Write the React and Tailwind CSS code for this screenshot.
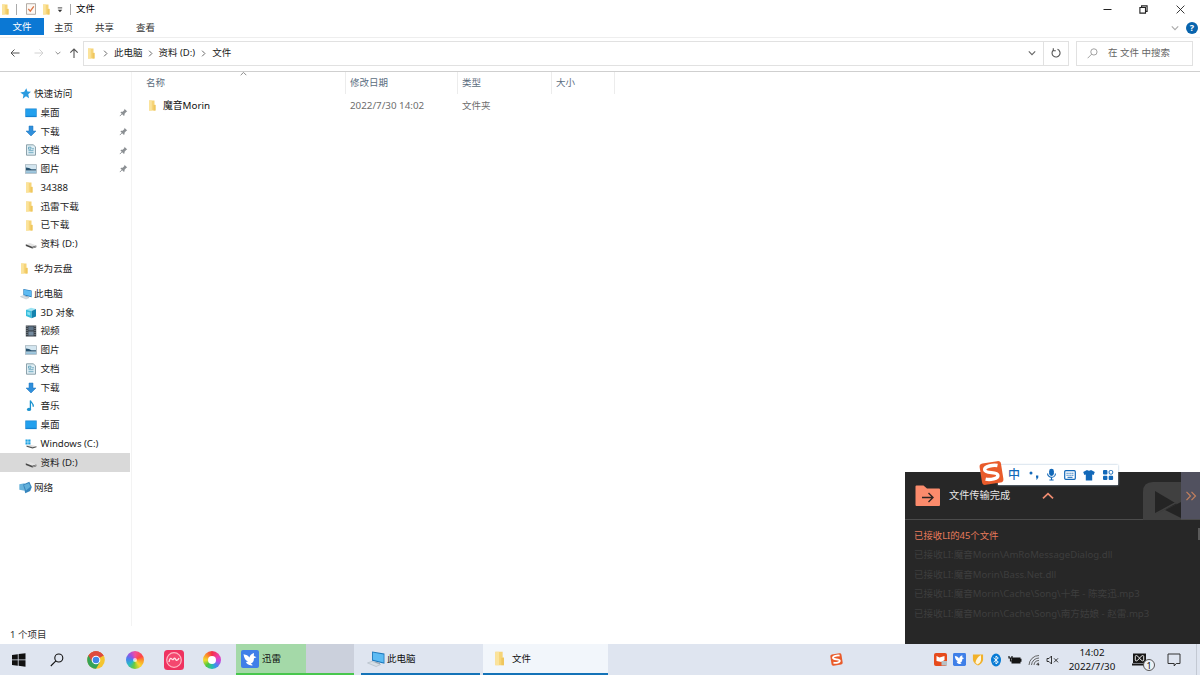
import React from "react";

const Folder = ({ className = "w-[9px] h-[11px]" }) => (
  <svg viewBox="0 0 9 11" className={className}>
    <path d="M1 0.5h5.5v4.2h1v5.800H1z" fill="#f6d477" />
    <path d="M1 0.5h2.800v10H1z" fill="#fbe39b" />
    <path d="M5.500 5h2v5.500h-2z" fill="#efc65e" />
  </svg>
);

const Star = () => (
  <svg viewBox="0 0 12 12" className="w-[11px] h-[11px]">
    <path d="M6.900 0.4l1.200 3.500 3.800.3-2.900 2.700.9 4.300-3.400-2.300-3.500 2.700.8-4.200L.3 5l4.300-.8z" fill="#2b9be0" />
  </svg>
);

const Desktop = () => (
  <svg viewBox="0 0 12 10" className="w-3 h-[10px]">
    <rect x="0.3" y="0.5" width="11.4" height="8.6" fill="#1583d2" />
    <rect x="1" y="1.2" width="10" height="6.6" fill="#22a0ee" />
  </svg>
);

const Download = () => (
  <svg viewBox="0 0 12 12" className="w-3 h-3">
    <path d="M4 1h4v5h3L6 11 1 6h3z" fill="#2f8fdb" stroke="#1c74bd" strokeWidth="0.5" />
  </svg>
);

const Doc = () => (
  <svg viewBox="0 0 12 12" className="w-3 h-3">
    <path d="M1.500.8h6.700l2.300 2v8.400h-9z" fill="#dfeef4" stroke="#8198a3" strokeWidth="0.9" />
    <path d="M3.5 3.2h2.5v2H3.5zM7 4.8h2M3.5 6.7h5M3.5 8.7h5" fill="none" stroke="#559bb6" strokeWidth="0.8" />
  </svg>
);

const Picture = () => (
  <svg viewBox="0 0 12 10" className="w-3 h-[10px]">
    <rect x="0.6" y="0.7" width="10.8" height="8.600" fill="#d4e6f0" stroke="#9aabb5" strokeWidth="0.7" />
    <path d="M1 3.500l3 .5 2.500 1.300 4.500-.1v1.300H1z" fill="#28536f" />
    <path d="M1 7.3h10v1.600H1z" fill="#8ebcd6" />
  </svg>
);

const Drive = () => (
  <svg viewBox="0 0 12 10" className="mt-[2px] w-3 h-[10px]">
    <path d="M.8 4.300L5 3l6.300 2.400-4.100 1.400z" fill="#e3e3e3" />
    <path d="M.8 4.300l6.400 2.500 4.100-1.400v1.800L7.200 8.600.8 5.900z" fill="#4a4a4a" />
    <path d="M7.6 7.200l3.300-1.100v.8L7.600 8z" fill="#b5b5b5" />
  </svg>
);

const WinDrive = () => (
  <svg viewBox="0 0 12 10" className="w-3 h-[10px]">
    <path d="M.5.5h2.200v2.200H.5zM3.200.5h2.300v2.200H3.200zM.5 3.2h2.200v2.200H.5zM3.200 3.200h2.300v2.200H3.200z" fill="#1ba1e2" />
    <path d="M1.500 6.600L6 6l5.500 1.200-4 1z" fill="#ddd" />
    <path d="M1.500 6.600l6 1.600 4-1v1l-4 1.300-6-1.800z" fill="#555" />
  </svg>
);

const Cube = () => (
  <svg viewBox="0 0 12 12" className="w-3 h-3">
    <path d="M1 2.800L6 .7l5 1.400-4.400 2z" fill="#9ae3f3" />
    <path d="M1 2.800l5.600 1.300v7.200L1 9z" fill="#38bddd" />
    <path d="M6.600 4.100L11 2.100v7.300l-4.400 1.900z" fill="#1383ae" />
    <path d="M2.200 4.700l3 .7v3l-3-1z" fill="#88e2f2" />
  </svg>
);

const Film = () => (
  <svg viewBox="0 0 12 12" className="w-3 h-3">
    <rect x="0.8" y="0.5" width="10.4" height="11" fill="#3a4148" />
    <path d="M3.4 1.4h5.2v4H3.4z" fill="#5f7488" />
    <path d="M3.4 6.5h5.2v4H3.4z" fill="#768ca0" />
    <path d="M2 1v10M10 1v10" stroke="#aab2ba" strokeWidth="0.8" strokeDasharray="1 1" />
  </svg>
);

const Music = () => (
  <svg viewBox="0 0 12 12" className="w-3 h-3">
    <path d="M5.4 .5v8.500M5.600.8c.3 2.200 3.600 2.700 2.500 6" fill="none" stroke="#1c93cf" strokeWidth="1.3" />
    <ellipse cx="4" cy="9.400" rx="2.100" ry="1.700" fill="#1c93cf" />
  </svg>
);

const Computer = ({ className = "w-3 h-3" }) => (
  <svg viewBox="0 0 16 16" className={className}>
    <path d="M4.500 1.300L15.500 3.200v9L4.500 9.500z" fill="#1d78bb" />
    <path d="M5.300 2.300l9.500 1.700v7l-9.500-2.400z" fill="#5dbbf3" />
    <path d="M7 10.300l4.500 1.200v1.300L7 12z" fill="#8d9ba8" />
    <path d="M.5 11.500l4-1.400 7.600 2.800-4 1.800z" fill="#d7dfe6" stroke="#a7b3bd" strokeWidth="0.5" />
  </svg>
);

const Network = () => (
  <svg viewBox="0 0 12 12" className="-ml-px w-[13px] h-[13px]">
    <path d="M.3 3l4.900-.9v7L.3 8z" fill="#69b3db" />
    <path d="M3.800 3.300L9.500.8l2.300 4.700-1.500 3.800-4.500 2z" fill="#3585bd" />
    <path d="M4.600 3.800l4.600-1.800 1.300 3.400-4 3.400z" fill="#62b0da" />
  </svg>
);

const Pin = () => (
  <svg viewBox="0 0 10 10" className="w-[9px] h-[9px]">
    <path d="M6 .8l3.200 3.100-1 .4-2 2-.1 1.900-.9.4-3.600-3.700.7-.8 1.800 0 1.900-2z" fill="#8b8f93" />
    <path d="M3.500 6.400L.9 9" stroke="#8b8f93" strokeWidth="1" />
  </svg>
);

const Chevron = ({ className = "", d = "M1 3l4 4 4-4", color = "#666" }) => (
  <svg viewBox="0 0 10 10" className={className}>
    <path d={d} fill="none" stroke={color} strokeWidth="1.4" />
  </svg>
);

const Magnifier = ({ className = "", width = 1 }) => (
  <svg viewBox="0 0 14 14" className={className}>
    <circle cx="8.800" cy="5" r="4" fill="none" stroke="currentColor" strokeWidth={width} />
    <path d="M5.900 7.900L.8 13" stroke="currentColor" strokeWidth={width} />
  </svg>
);

const SogouLogo = ({ className = "", bg = "#e95b2b" }) => (
  <svg viewBox="0 0 24 24" className={className}>
    <g transform="rotate(-9 12 12)">
      <rect x="1.600" y="1.600" width="20.800" height="20.800" rx="3.200" fill={bg} />
      <path
        d="M18.800 5.800C15 4.400 6.200 4.400 6 8c-.2 4 11.700 3.200 11.700 7 0 3.600-8.200 3.500-12.200 1.900"
        fill="none"
        stroke="#fff"
        strokeWidth="3.300"
      />
    </g>
  </svg>
);

const Bird = ({ className = "" }) => (
  <svg viewBox="0 0 18 18" className={className}>
    <rect width="18" height="18" rx="2" fill="#3f7fe8" />
    <path d="M2.500 4.200c3 .3 4.500 1.400 6 3.300C8.700 5.500 10.500 3.500 13 3l-.2 3 2.700 1.300-2.500.9c-.1 3.500-1.500 4.700-3.200 5.300l2.200 1.800C8 15.800 5.500 14 5 12l2-.5C4.500 10.500 3 8 2.500 4.200z" fill="#fff" />
  </svg>
);

const groups = [
  {
    title: "快速访问",
    icon: <Star />,
    items: [
      { label: "桌面", icon: <Desktop />, pinned: true },
      { label: "下载", icon: <Download />, pinned: true },
      { label: "文档", icon: <Doc />, pinned: true },
      { label: "图片", icon: <Picture />, pinned: true },
      { label: "34388", icon: <Folder /> },
      { label: "迅雷下载", icon: <Folder /> },
      { label: "已下载", icon: <Folder /> },
      { label: "资料 (D:)", icon: <Drive /> },
    ],
  },
  { title: "华为云盘", icon: <Folder />, items: [] },
  {
    title: "此电脑",
    icon: <Computer />,
    items: [
      { label: "3D 对象", icon: <Cube /> },
      { label: "视频", icon: <Film /> },
      { label: "图片", icon: <Picture /> },
      { label: "文档", icon: <Doc /> },
      { label: "下载", icon: <Download /> },
      { label: "音乐", icon: <Music /> },
      { label: "桌面", icon: <Desktop /> },
      { label: "Windows (C:)", icon: <WinDrive /> },
      { label: "资料 (D:)", icon: <Drive />, selected: true },
    ],
  },
  { title: "网络", icon: <Network />, items: [] },
];

const TitleBar = () => (
  <div className="flex h-[18px] items-center">
    <Folder className="ml-[1px] h-[11px] w-[9px]" />
    <div className="ml-[6px] h-[11px] w-px bg-[#aaa]" />
    <svg viewBox="0 0 10 12" className="ml-[9px] h-3 w-[10px]">
      <path d="M.5.7h9v10.600h-9z" fill="#fdf8f3" stroke="#a09890" strokeWidth="0.8" />
      <path d="M2.300 5.800l2 2.400 3.500-4.800" fill="none" stroke="#db7445" strokeWidth="1.300" />
    </svg>
    <Folder className="ml-[6px] h-[11px] w-[9px]" />
    <svg viewBox="0 0 6 6" className="ml-[6px] mt-[2px] h-[6px] w-[6px]">
      <path d="M.8.9h4.400" stroke="#333" strokeWidth="0.9" />
      <path d="M.8 2.700h4.400L3 5.200z" fill="#333" />
    </svg>
    <div className="ml-[7px] h-[11px] w-px bg-[#aaa]" />
    <span className="ml-[5px] text-[9.5px] text-black">文件</span>
    <div className="ml-auto flex items-center">
      <svg viewBox="0 0 9 9" className="h-[9px] w-[9px]">
        <path d="M.5 4.500h8" stroke="#222" />
      </svg>
      <svg viewBox="0 0 9 9" className="ml-[27px] h-[9px] w-[9px]">
        <path d="M.9 2.500h5.600v5.600H.9zM2.600 2.300V.9h5.500v5.500H6.700" fill="none" stroke="#222" strokeWidth="1.100" />
      </svg>
      <svg viewBox="0 0 9 9" className="ml-7 mr-[15px] h-[9px] w-[9px]">
        <path d="M.6.6l7.800 7.800M8.400.6L.6 8.400" stroke="#222" strokeWidth="0.9" />
      </svg>
    </div>
  </div>
);

const Ribbon = () => (
  <div className="flex h-[20px] items-center border-b border-[#eeeeee] text-[9.5px] text-[#333]">
    <div className="flex h-[17px] w-[44px] -translate-y-px items-center justify-center bg-[#0b78d4] text-white">文件</div>
    <span className="ml-[10px]">主页</span>
    <span className="ml-[22px]">共享</span>
    <span className="ml-[22px]">查看</span>
    <Chevron className="ml-auto h-[8px] w-[8px]" color="#aaa" />
    <div className="ml-[7px] mr-[2px] flex h-3 w-3 items-center justify-center rounded-full bg-[#0864ad] text-[9px] font-bold text-white">?</div>
  </div>
);

const AddressBar = () => (
  <div className="flex h-[34px] items-center border-b border-[#cfcfcf] pb-[3px] text-[9.5px] text-[#222]">
    <svg viewBox="0 0 10 10" className="ml-[10px] h-[10px] w-[10px]">
      <path d="M9.500 5H1M4.500 1.500L1 5l3.500 3.500" fill="none" stroke="#555" />
    </svg>
    <svg viewBox="0 0 10 10" className="ml-[14px] h-[10px] w-[10px]">
      <path d="M.5 5H9M5.500 1.500L9 5 5.500 8.500" fill="none" stroke="#d2d2d2" />
    </svg>
    <Chevron className="ml-[11px] h-[6px] w-[6px]" color="#777" />
    <svg viewBox="0 0 10 10" className="ml-[8px] h-[10px] w-[10px]">
      <path d="M5 10V1M1.300 4.700L5 1l3.700 3.700" fill="none" stroke="#555" strokeWidth="1.100" />
    </svg>
    <div className="ml-[4px] flex h-[25px] w-[986px] items-center border border-[#e1e1e1]">
      <Folder className="ml-[3px] h-[11px] w-[9px]" />
      <Chevron className="ml-[6px] h-[7px] w-[7px]" d="M3 1l4 4-4 4" />
      <span className="ml-[5px]">此电脑</span>
      <Chevron className="ml-[4px] h-[7px] w-[7px]" d="M3 1l4 4-4 4" />
      <span className="ml-[5px]">资料 (D:)</span>
      <Chevron className="ml-[5px] h-[7px] w-[7px]" d="M3 1l4 4-4 4" />
      <span className="ml-[5px]">文件</span>
      <Chevron className="ml-auto mr-[7px] h-[8px] w-[8px]" />
      <div className="flex h-full w-[25px] items-center justify-center border-l border-[#e1e1e1]">
        <svg viewBox="0 0 10 10" className="h-[10px] w-[10px]">
          <path d="M6.500 1.300A4 4 0 1 1 2.300 2.100M2.300.3v2.500h2.500" fill="none" stroke="#555" strokeWidth="1.100" />
        </svg>
      </div>
    </div>
    <div className="ml-[7px] flex h-[25px] w-[117px] items-center border border-[#e1e1e1] text-[#666]">
      <Magnifier className="ml-[10px] h-[11px] w-[11px] text-[#888]" />
      <span className="ml-[10px]">在 文件 中搜索</span>
    </div>
  </div>
);

const Sidebar = () => (
  <div className="flex w-[132px] shrink-0 flex-col gap-[6.2px] border-r border-[#f3f3f3] pt-[12.500px] text-[9.6px] text-[#1c1c1c]">
    {groups.map((group) => (
      <div key={group.title}>
        <div className="flex h-[18.75px] items-center pl-5">
          <span className="flex w-[14px]">{group.icon}</span>
          {group.title}
        </div>
        {group.items.map((item) => (
          <div
            key={item.label}
            className={`flex h-[18.75px] w-[130px] items-center pl-[25px] ${item.selected ? "bg-[#d9d9d9]" : ""}`}
          >
            <span className="flex w-[15.5px]">{item.icon}</span>
            {item.label}
            {item.pinned && (
              <span className="ml-auto mr-[2px]">
                <Pin />
              </span>
            )}
          </div>
        ))}
      </div>
    ))}
  </div>
);

const FileList = () => (
  <div className="flex-1 text-[9.5px]">
    <div className="flex h-[22px] text-[#5b6d80]">
      <div className="relative flex w-[214px] items-center border-r border-[#ececec] pl-[14px]">
        名称
        <Chevron className="absolute left-[108px] top-[-1px] h-[7px] w-[7px]" d="M1 6l4-4 4 4" color="#888" />
      </div>
      <div className="flex w-[112px] items-center border-r border-[#ececec] pl-[4px]">修改日期</div>
      <div className="flex w-[94px] items-center border-r border-[#ececec] pl-[4px]">类型</div>
      <div className="flex w-[63px] items-center border-r border-[#ececec] pl-[4px]">大小</div>
    </div>
    <div className="mt-[2px] flex h-[19px] items-center text-[#6d6d6d]">
      <div className="flex w-[218px] items-center pl-[16px] text-[#111]">
        <Folder />
        <span className="ml-[6px] text-[9.8px]">魔音Morin</span>
      </div>
      <span className="w-[112px] text-[9.8px]">2022/7/30 14:02</span>
      <span>文件夹</span>
    </div>
  </div>
);

const received = [
  "已接收LI:魔音Morin\\AmRoMessageDialog.dll",
  "已接收LI:魔音Morin\\Bass.Net.dll",
  "已接收LI:魔音Morin\\Cache\\Song\\十年 - 陈奕迅.mp3",
  "已接收LI:魔音Morin\\Cache\\Song\\南方姑娘 - 赵雷.mp3",
];

const TransferToast = () => (
  <div className="absolute left-[905px] top-[472px] h-[172px] w-[295px] overflow-hidden bg-[#272727]">
    <div className="flex h-12 items-center border-b border-[#4b4b4b]">
      <svg viewBox="0 0 25 22" className="ml-[10px] h-[22px] w-[25px]">
        <path d="M.5 1.500Q.5.5 1.500.5h7l3.500 3h12Q25 3.500 25 4.500V20q0 1-1 1H1.500q-1 0-1-1z" fill="#fb8b6c" />
        <path d="M7 12.500h11M13.500 8l4.500 4.500-4.500 4.500" fill="none" stroke="#2b2523" strokeWidth="1.400" />
      </svg>
      <span className="ml-[9px] text-[10.2px] text-[#e6e6e6]">文件传输完成</span>
      <Chevron className="ml-[32px] h-[12px] w-[12px]" d="M.8 7L5 3l4.200 4" color="#ee8b70" />
      <svg viewBox="0 0 38 38" className="ml-auto mt-[10px] h-[38px] w-[38px]">
        <path d="M0 38V10Q0 0 10 0h28v38z" fill="#404040" />
        <path d="M12 9l22 13-22 10z" fill="#242424" />
        <path d="M38 20l-16 8 16 8z" fill="#242424" />
        <path d="M12 32l24-13" stroke="#404040" strokeWidth="1.500" />
      </svg>
      <div className="flex h-full w-[19px] items-center justify-center bg-[#51515f]">
        <svg viewBox="0 0 12 10" className="h-[10px] w-3">
          <path d="M1.500.8L5.500 5l-4 4.200M6.500.8l4 4.200-4 4.200" fill="none" stroke="#c3805e" strokeWidth="1.200" />
        </svg>
      </div>
    </div>
    <div className="flex pl-[9px] pt-[6px]">
      <div className="flex flex-col whitespace-nowrap text-[9.6px] leading-[19.400px] text-[#3e3e3e]">
        <span className="text-[9.4px] text-[#e87b5c]">已接收LI的45个文件</span>
        {received.map((line) => (
          <span key={line}>{line}</span>
        ))}
      </div>
      <div className="ml-auto mt-[2px] h-3 w-[2px] bg-[#5a5a5a]" />
    </div>
  </div>
);

const ImeBar = () => (
  <div className="absolute left-[979px] top-[460px] flex items-center">
    <SogouLogo className="z-10 h-[26px] w-[25px]" />
    <div className="-ml-[6px] mt-[3px] flex h-[20px] w-[120px] items-center bg-white pl-[10px] text-[#1268b8] shadow-[0_0_2px_#9fbad3]">
      <span className="w-[12px] text-[12px] font-medium leading-none">中</span>
      <svg viewBox="0 0 10 10" className="ml-[9px] h-[10px] w-[10px]">
        <circle cx="2" cy="3" r="1.500" fill="currentColor" />
        <path d="M7 5.500h2.300v2L8 9.500h-.9l.6-1.700H7z" fill="currentColor" />
      </svg>
      <svg viewBox="0 0 12 14" className="ml-[7px] h-[13px] w-[11px]">
        <rect x="3.400" y=".8" width="5.200" height="7.800" rx="2.600" fill="currentColor" />
        <path d="M1.700 5.800a4.300 4.300 0 0 0 8.600 0M6 10v3M3.700 13h4.600" fill="none" stroke="currentColor" strokeWidth="1.200" />
      </svg>
      <svg viewBox="0 0 12 10" className="ml-[7px] h-[10px] w-3">
        <rect x=".7" y=".7" width="10.600" height="8.600" rx="1" fill="none" stroke="currentColor" strokeWidth="1.200" />
        <path d="M2.500 3.200h7M2.500 5.200h7" stroke="currentColor" strokeWidth="1.100" strokeDasharray="1.200 .7" />
        <path d="M3.500 7.300h5" stroke="currentColor" strokeWidth="1" />
      </svg>
      <svg viewBox="0 0 12 12" className="ml-[7px] h-3 w-3">
        <path d="M4 1q2 1.600 4 0l3.800 2-1.200 3-1.400-.5v6H2.800v-6L1.400 6 .2 3z" fill="currentColor" />
      </svg>
      <svg viewBox="0 0 12 12" className="ml-[7px] h-3 w-3">
        <rect x="1" y="1" width="4.400" height="4.400" rx="1" fill="currentColor" />
        <rect x="7.100" y="1.500" width="3.600" height="3.600" rx="1.300" fill="none" stroke="currentColor" />
        <rect x="1" y="6.700" width="4.400" height="4.400" rx="1" fill="currentColor" />
        <rect x="6.700" y="6.700" width="4.400" height="4.400" rx="1" fill="currentColor" />
      </svg>
    </div>
  </div>
);

const Taskbar = () => (
  <div className="relative flex h-[31px] items-center bg-[#dfe5f0] text-[9.5px] text-[#111]">
    <svg viewBox="0 0 14 14" className="ml-3 h-[14px] w-[14px]">
      <path d="M0 2l5.800-.8v5.300H0zM6.600 1.100L13.500.2v6.300H6.600zM0 7.300h5.800v5.400L0 11.900zM6.600 7.300h6.900v6.400l-6.900-1z" fill="#111" />
    </svg>
    <Magnifier className="ml-[24px] h-[14px] w-[14px]" width={1.1} />
    <svg viewBox="0 0 18 18" className="ml-[23px] h-[18px] w-[18px]">
      <circle cx="9" cy="9" r="8.800" fill="#f4c531" />
      <path d="M9 9L1.400 4.600A8.800 8.800 0 0 1 16.600 4.600z" fill="#dd4b3e" />
      <path d="M9 9L1.400 4.600A8.800 8.800 0 0 0 9 17.800l4-6.800z" fill="#35a357" />
      <path d="M9 4.800h7.700l-.1-.2A8.800 8.800 0 0 0 1.400 4.600L5.300 11z" fill="#dd4b3e" />
      <circle cx="9" cy="9" r="4.300" fill="#fff" />
      <circle cx="9" cy="9" r="3.300" fill="#4287e8" />
    </svg>
    {/* Browser shortcuts */}
    <div className="ml-[21px] flex h-[18px] w-[18px] items-center justify-center rounded-full bg-[conic-gradient(#f04f9c,#ff4545_60deg,#fb9a2b_95deg,#f7d82e_140deg,#67cc3d_190deg,#28b9c4_235deg,#4a7ff0_280deg,#a04ee0_320deg,#f04f9c)]">
      <div className="h-[4px] w-[4px] rounded-full bg-white/70" />
    </div>
    <svg viewBox="0 0 20 20" className="ml-[20px] h-5 w-5">
      <rect width="20" height="20" rx="3.500" fill="#ef3360" />
      <circle cx="10" cy="10" r="7.300" fill="#f4486f" stroke="#ffb6c3" strokeWidth="1.200" />
      <path d="M5 12c.5-3 1.500-4.500 2.600-3.200s1.400 1 2 .2 1.500-1.300 2 .3S14 10.500 15 8" fill="none" stroke="#ffe1e5" strokeWidth="1.300" />
    </svg>
    <div className="ml-[19px] flex h-[18px] w-[18px] items-center justify-center rounded-full bg-[conic-gradient(#f4304a,#ee3fa8_60deg,#c04be0_100deg,#3e8df0_145deg,#25bfae_180deg,#4fc83c_225deg,#f0dc2c_270deg,#fb8a2b_315deg,#f4304a)]">
      <div className="h-[8px] w-[8px] rounded-full bg-white" />
    </div>
    <div className="ml-[15px] flex h-full w-[118px] border-b-2 border-[#48c74d]">
      <div className="flex w-[70px] items-center bg-[#a4d9a8] pl-[5px]">
        <Bird className="h-[18px] w-[18px]" />
        <span className="ml-[3px]">迅雷</span>
      </div>
      <div className="flex-1 bg-[#cbd0dc]" />
    </div>
    <div className="ml-[7px] flex h-full w-[119px] items-center border-b-2 border-[#1473b8] pl-[6px]">
      <Computer className="h-[18px] w-[18px]" />
      <span className="ml-[2px]">此电脑</span>
    </div>
    <div className="ml-[3px] flex h-full w-[125px] items-center border-b-2 border-[#1473b8] bg-[#f2f6fb] pl-[11px]">
      <Folder className="h-[15px] w-[12px]" />
      <span className="ml-[6px]">文件</span>
    </div>
    <SogouLogo className="ml-auto h-[13px] w-[13px]" />
    <div className="ml-[91px] flex items-center gap-[6px]">
      <svg viewBox="0 0 13 13" className="h-[13px] w-[13px]">
        <rect width="13" height="13" rx="2" fill="#e64b1d" />
        <path d="M2.500 3l3 1.500L10.500 3v4l-3 2-5-1z" fill="#fff" />
        <rect x="7.500" y="8" width="5.500" height="4.500" fill="#b6c0c5" />
      </svg>
      <Bird className="h-[13px] w-[13px]" />
      <svg viewBox="0 0 13 13" className="h-[13px] w-[12px]">
        <path d="M1 1h11v6q-1 4-5.500 6Q2 11 1 7z" fill="#f1b12a" />
        <path d="M9.500 1.500Q10.500 7 8.500 10L6 12 3.800 10Q4 5.500 9.500 1.500z" fill="#fff5dc" />
      </svg>
      <svg viewBox="0 0 12 14" className="h-[14px] w-3">
        <ellipse cx="6" cy="7" rx="5" ry="6.500" fill="#087bd5" />
        <path d="M3.500 4.800L8.300 9 6 11V3l2.300 2L3.500 9.200" fill="none" stroke="#fff" strokeWidth="0.9" />
      </svg>
      <svg viewBox="0 0 14 10" className="h-[10px] w-[14px]">
        <path d="M3.500 2.500h9v1.300h1v3h-1v1.700h-9z" fill="#151515" />
        <path d="M1 1v2h3V1M2.500 3v3h2" fill="none" stroke="#151515" strokeWidth="1.200" />
      </svg>
      <svg viewBox="0 0 12 12" className="h-3 w-3">
        <path d="M1 11A10 10 0 0 1 11 1.500M3.500 11A7.500 7.500 0 0 1 11 4M6 11a5 5 0 0 1 5-4.500M8.500 11A2.500 2.500 0 0 1 11 9" fill="none" stroke="#555" strokeWidth="0.9" />
        <circle cx="10.300" cy="10.500" r="1" fill="#333" />
      </svg>
      <svg viewBox="0 0 13 10" className="h-[10px] w-[13px]">
        <path d="M1 3.500h2L5.500 1v8L3 6.500H1zM8 3.300l4 4M12 3.300l-4 4" fill="none" stroke="#222" strokeWidth="0.9" />
      </svg>
    </div>
    <div className="ml-[6px] w-[54px] text-center text-[9.8px] leading-[14px]">
      <div>14:02</div>
      <div>2022/7/30</div>
    </div>
    <div className="relative ml-[13px] h-[13px] w-[16px]">
      <svg viewBox="0 0 16 13" className="h-[13px] w-4">
        <path d="M1 .5h13V10H1zM0 10.500h15v2H0z" fill="#181818" />
        <path d="M3.300 3.500q0-1 1-1 1.300 0 3.200 2.700Q9.400 2.500 10.700 2.500q1 0 1 1v3.400q0 1-1 1-1.300 0-3.200-2.700Q5.600 7.900 4.300 7.900q-1 0-1-1z" fill="none" stroke="#fff" strokeWidth="0.9" />
      </svg>
      <div className="absolute left-[11px] top-[6px] flex h-3 w-3 items-center justify-center rounded-full border border-[#555] bg-[#edf1f6] text-[9px] leading-none">
        1
      </div>
    </div>
    <svg viewBox="0 0 14 14" className="ml-[19px] h-[14px] w-[14px]">
      <path d="M1 1h12v9.500H9.200L7.200 13v-2.500H1z" fill="none" stroke="#333" />
    </svg>
    <div className="ml-[15px] mr-[3px] h-full w-px bg-[#c3c9d3]" />
  </div>
);

export default function App() {
  return (
    <div className="relative flex h-[675px] w-[1200px] flex-col overflow-hidden bg-white font-['Noto_Sans','Noto_Sans_CJK_SC',sans-serif] leading-none">
      <TitleBar />
      <Ribbon />
      <AddressBar />
      <div className="flex flex-1">
        <Sidebar />
        <FileList />
      </div>
      <div className="flex h-[18px] items-center pl-[10px] text-[9.5px] text-[#333]">1 个项目</div>
      <Taskbar />
      <TransferToast />
      <ImeBar />
    </div>
  );
}
